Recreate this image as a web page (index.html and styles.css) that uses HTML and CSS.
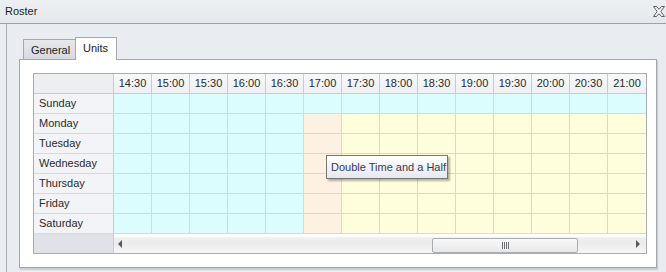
FILE: index.html
```html
<!DOCTYPE html>
<html>
<head>
<meta charset="utf-8">
<link rel="stylesheet" href="styles.css">
</head>
<body>
<div class="titlebar">
  <span class="title">Roster</span>
  <svg class="close" width="12" height="11" viewBox="0 0 12 11"><path d="M0.5 0.5 H3.5 L6 3.3 L8.5 0.5 H11.5 L7.8 5.5 L11.5 10.5 H8.5 L6 7.7 L3.5 10.5 H0.5 L4.2 5.5 Z" fill="#f4f5f7" stroke="#5a5d63" stroke-width="1"/></svg>
</div>
<div class="frame">
  <div class="tabs">
    <div class="tab">General</div>
    <div class="tab active">Units</div>
  </div>
  <div class="panel">
    <div class="grid">
      <div class="hd corner"></div>
      <div class="hd">14:30</div><div class="hd">15:00</div><div class="hd">15:30</div><div class="hd">16:00</div><div class="hd">16:30</div><div class="hd">17:00</div><div class="hd">17:30</div><div class="hd">18:00</div><div class="hd">18:30</div><div class="hd">19:00</div><div class="hd">19:30</div><div class="hd">20:00</div><div class="hd">20:30</div><div class="hd last">21:00</div>

      <div class="rh">Sunday</div>
      <div class="c"></div><div class="c"></div><div class="c"></div><div class="c"></div><div class="c"></div><div class="c"></div><div class="c"></div><div class="c"></div><div class="c"></div><div class="c"></div><div class="c"></div><div class="c"></div><div class="c"></div><div class="c last"></div>

      <div class="rh">Monday</div>
      <div class="c"></div><div class="c"></div><div class="c"></div><div class="c"></div><div class="c"></div><div class="p"></div><div class="y"></div><div class="y"></div><div class="y"></div><div class="y"></div><div class="y"></div><div class="y"></div><div class="y"></div><div class="y last"></div>

      <div class="rh">Tuesday</div>
      <div class="c"></div><div class="c"></div><div class="c"></div><div class="c"></div><div class="c"></div><div class="p"></div><div class="y"></div><div class="y"></div><div class="y"></div><div class="y"></div><div class="y"></div><div class="y"></div><div class="y"></div><div class="y last"></div>

      <div class="rh">Wednesday</div>
      <div class="c"></div><div class="c"></div><div class="c"></div><div class="c"></div><div class="c"></div><div class="p"></div><div class="y"></div><div class="y"></div><div class="y"></div><div class="y"></div><div class="y"></div><div class="y"></div><div class="y"></div><div class="y last"></div>

      <div class="rh">Thursday</div>
      <div class="c"></div><div class="c"></div><div class="c"></div><div class="c"></div><div class="c"></div><div class="p"></div><div class="y"></div><div class="y"></div><div class="y"></div><div class="y"></div><div class="y"></div><div class="y"></div><div class="y"></div><div class="y last"></div>

      <div class="rh">Friday</div>
      <div class="c"></div><div class="c"></div><div class="c"></div><div class="c"></div><div class="c"></div><div class="p"></div><div class="y"></div><div class="y"></div><div class="y"></div><div class="y"></div><div class="y"></div><div class="y"></div><div class="y"></div><div class="y last"></div>

      <div class="rh">Saturday</div>
      <div class="c"></div><div class="c"></div><div class="c"></div><div class="c"></div><div class="c"></div><div class="p"></div><div class="y"></div><div class="y"></div><div class="y"></div><div class="y"></div><div class="y"></div><div class="y"></div><div class="y"></div><div class="y last"></div>

      <div class="filler"></div>
      <div class="scrollbar">
        <span class="arrow left"></span>
        <span class="thumb"><span class="grip"></span></span>
        <span class="arrow right"></span>
      </div>
    </div>
  </div>
</div>
<div class="tooltip">Double Time and a Half</div>
</body>
</html>
```

FILE: styles.css
```css
* { box-sizing: border-box; margin: 0; padding: 0; }
html, body { width: 666px; height: 272px; overflow: hidden; }
body {
  font-family: "Liberation Sans", Arial, sans-serif;
  font-size: 11px;
  color: #1e1e1e;
  background: #e9ecf0;
  position: relative;
}
.titlebar {
  height: 24px;
  border-bottom: 1px solid #9ca2aa;
  display: flex;
  align-items: center;
  justify-content: space-between;
  padding: 0 1px 1px 5px;
  background: linear-gradient(#edf0f3, #e5e8ec);
}
.title { color: #1e1e1e; }
.close { display: block; margin-top: 1px; }
.frame {
  margin-left: 6px;
  border-left: 1px solid #a9aeb5;
  height: 248px;
  padding: 13px 0 0 12px;
}
.tabs {
  display: flex;
  align-items: flex-end;
  margin-left: 4px;
  height: 22px;
  position: relative;
  z-index: 1;
}
.tab {
  height: 20px;
  width: 52px;
  border: 1px solid #a4a9b0;
  border-bottom: none;
  border-right: none;
  background: linear-gradient(#e6e8ec, #d6d9de);
  padding: 4px 0 0 7px;
  color: #222;
}
.tab.active {
  height: 23px;
  width: 42px;
  border-right: 1px solid #a4a9b0;
  background: #fff;
  margin-bottom: -1px;
  padding: 4px 0 0 7px;
}
.panel {
  width: 638px;
  height: 209px;
  background: #fff;
  border: 1px solid #a0a6ad;
  padding: 13px 0 0 13px;
  box-shadow: 1px 2px 1px rgba(0,0,0,0.12);
}
.grid {
  display: grid;
  grid-template-columns: 80px repeat(14, 38px);
  grid-template-rows: repeat(8, 20px) 19px;
  width: 614px;
  border: 1px solid #a8adb4;
}
.grid > div { border-right: 1px solid #d3dadd; border-bottom: 1px solid #d3dadd; }
.grid > .last { border-right: none; }
.hd {
  background: linear-gradient(#f7f8fa, #eef0f3);
  border-right: 1px solid #c6cbd1 !important;
  border-bottom: 1px solid #c6cbd1 !important;
  text-align: center;
  line-height: 19px;
  color: #2a2a2a;
}
.hd.last { border-right: none !important; }
.corner { background: #eceef2; }
.rh {
  background: #f3f4f7;
  border-right: 1px solid #c6cbd1 !important;
  border-bottom: 1px solid #d5d9de !important;
  padding-left: 5px;
  line-height: 19px;
  color: #2a2a2a;
}
.c { background: #dbfdfe; }
.p { background: #fdf2e1; }
.y { background: #fefddc; }
.filler {
  background: #dfe2e7;
  border-right: 1px solid #c6cbd1 !important;
  border-bottom: none !important;
}
.scrollbar {
  grid-column: span 14;
  border: none !important;
  display: flex;
  align-items: center;
  background: linear-gradient(#ffffff 0, #ffffff 2px, #efefef 4px, #ececec 50%, #f6f6f6 100%);
}
.arrow {
  width: 0;
  height: 0;
  border-top: 4px solid transparent;
  border-bottom: 4px solid transparent;
}
.arrow.left { border-right: 4px solid #56595e; margin-left: 4px; margin-top: 1px; }
.arrow.right { border-left: 4px solid #56595e; margin-left: auto; margin-right: 6px; margin-top: 1px; }
.thumb {
  align-self: flex-end;
  margin-left: 310px;
  width: 146px;
  height: 15px;
  border: 1px solid #a9adb4;
  border-radius: 2px;
  background: linear-gradient(#f8f8f8, #e8e8ea);
  display: flex;
  align-items: center;
  justify-content: center;
}
.grip {
  width: 7px;
  height: 7px;
  background: repeating-linear-gradient(90deg, #6b6e73 0, #6b6e73 1px, transparent 1px, transparent 2px);
}
.tooltip {
  position: absolute;
  left: 326px;
  top: 155px;
  width: 122px;
  height: 24px;
  border: 1px solid #767676;
  background: linear-gradient(#ffffff, #e6e8f0);
  color: #343a52;
  padding: 0 0 0 4px;
  line-height: 22px;
  box-shadow: 2px 2px 2px rgba(0,0,0,0.3);
  white-space: nowrap;
}
```
